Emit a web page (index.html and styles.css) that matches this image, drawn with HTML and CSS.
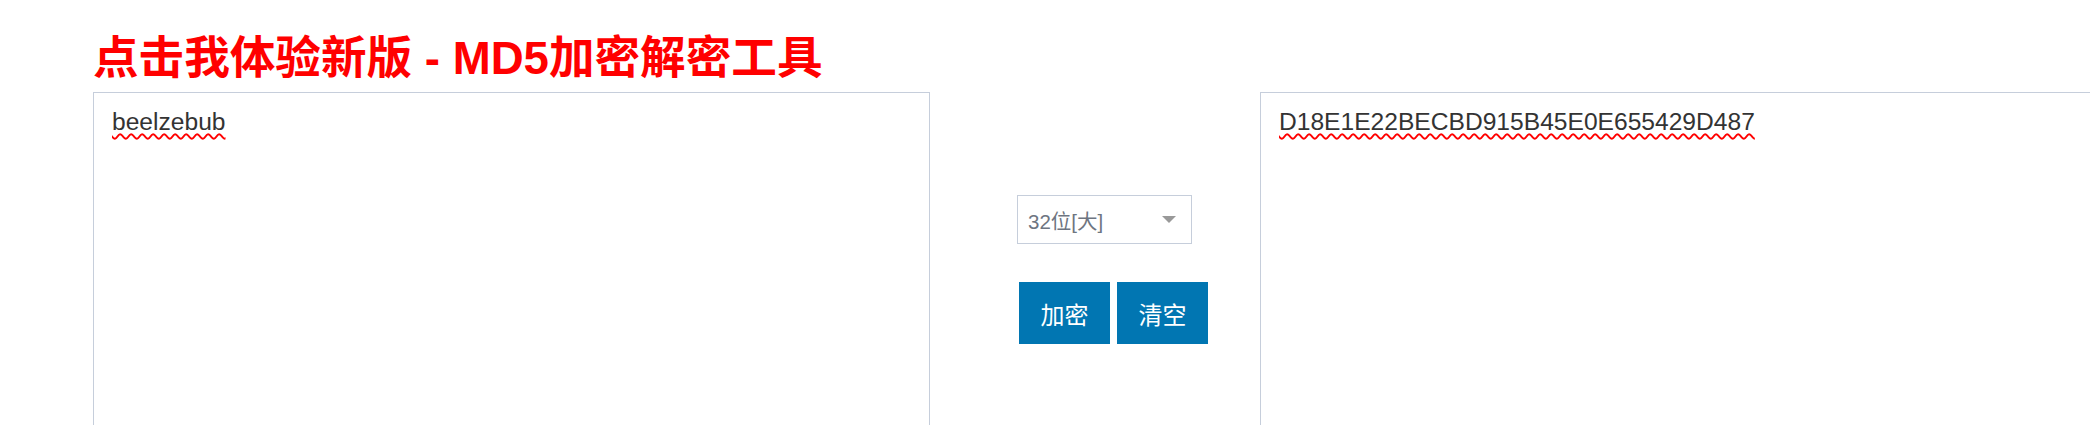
FILE: index.html
```html
<!DOCTYPE html>
<html lang="zh-CN">
<head>
<meta charset="utf-8">
<title>MD5加密解密工具</title>
<link rel="stylesheet" href="styles.css">
</head>
<body>
<div class="page">
  <h1 class="title">点击我体验新版 - MD5加密解密工具</h1>
  <div class="tool">
    <div class="box"><span class="word">beelzebub</span></div>
    <div class="middle">
      <div class="select">
        <span class="select-text">32位[大]</span>
        <span class="caret"></span>
      </div>
      <div class="buttons">
        <div class="btn">加密</div>
        <div class="btn">清空</div>
      </div>
    </div>
    <div class="box"><span class="word">D18E1E22BECBD915B45E0E655429D487</span></div>
  </div>
</div>
</body>
</html>
```

FILE: styles.css
```css
html, body {
  margin: 0;
  padding: 0;
  overflow: hidden;
  background: #fff;
}
.page {
  padding: 29px 0 0 93px;
  font-family: "Liberation Sans", "Noto Sans CJK SC", sans-serif;
}
.title {
  margin: 0 0 3px 0;
  font-size: 45.6px;
  line-height: 60px;
  font-weight: bold;
  color: #ff0000;
  white-space: nowrap;
}
.tool {
  display: flex;
  align-items: flex-start;
  width: 2004px;
}
.box {
  flex: 0 0 auto;
  box-sizing: border-box;
  width: 837px;
  height: 400px;
  border: 1px solid #c6cedb;
  padding: 15px 18px;
  font-size: 24.6px;
  line-height: 27px;
  color: #333;
  background: #fff;
}
.word {
  text-decoration: underline wavy #ff0000;
  text-decoration-thickness: 1.6px;
  text-underline-offset: 3px;
}
.middle {
  flex: 0 0 auto;
  box-sizing: border-box;
  width: 330px;
  padding: 103px 0 0 87px;
  display: flex;
  flex-direction: column;
  align-items: flex-start;
}
.select {
  box-sizing: border-box;
  width: 175px;
  height: 49px;
  border: 1px solid #c6cedb;
  display: flex;
  align-items: center;
  justify-content: space-between;
  padding: 0 15px 0 10px;
  font-size: 20.5px;
  color: #6e7581;
}
.caret {
  width: 0;
  height: 0;
  border-left: 7px solid transparent;
  border-right: 7px solid transparent;
  border-top: 7px solid #999;
}
.buttons {
  display: flex;
  gap: 7px;
  margin: 38px 0 0 2px;
}
.btn {
  width: 91px;
  height: 62px;
  background: #0176b2;
  color: #fff;
  font-size: 24px;
  display: flex;
  align-items: center;
  justify-content: center;
}
```
